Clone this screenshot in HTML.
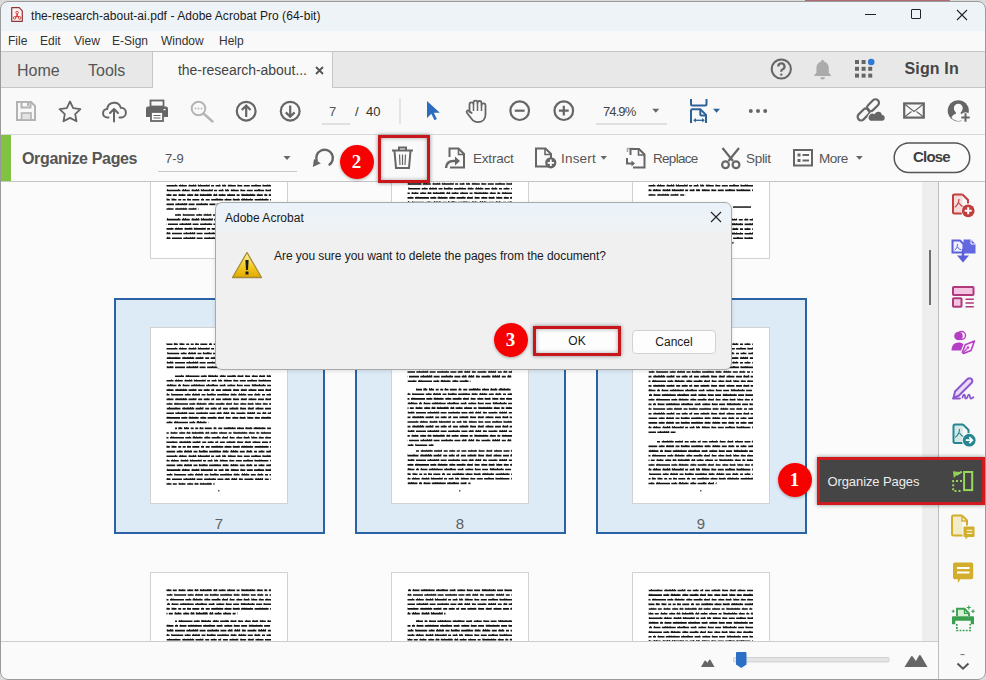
<!DOCTYPE html>
<html><head><meta charset="utf-8">
<style>
*{margin:0;padding:0;box-sizing:border-box}
html,body{width:986px;height:680px;overflow:hidden;background:#d9d9d9;font-family:"Liberation Sans",sans-serif}
.abs{position:absolute}
#win{position:absolute;left:0;top:0;width:986px;height:680px;overflow:hidden}
#frame{position:absolute;left:0;top:1px;width:986px;height:679px;border:1px solid #9a9a9a;border-radius:8px;box-shadow:0 0 0 6px #dadada;pointer-events:none}
#title{position:absolute;left:0;top:0;width:100%;height:31px;background:#eef3f8}
#menu{position:absolute;left:0;top:31px;width:100%;height:21px;background:#f9f9f9;border-bottom:1px solid #c6c6c6}
#tabs{position:absolute;left:0;top:52px;width:100%;height:36px;background:#e8e8e8;border-bottom:1px solid #c6c6c6}
#tool{position:absolute;left:0;top:88px;width:100%;height:47px;background:#f9f9f9;border-bottom:1px solid #d9d9d9}
#org{position:absolute;left:0;top:135px;width:100%;height:47px;background:#fafafa;border-bottom:1px solid #c4c4c4}
#content{position:absolute;left:0;top:182px;width:922px;height:459px;background:#fbfbfb;overflow:hidden}
#scroll{position:absolute;left:922px;top:182px;width:16px;height:459px;background:#eeeeee}
#rpanel{position:absolute;left:938px;top:182px;width:48px;height:498px;background:#f9f9f9;border-left:1px solid #bdbdbd}
#bottom{position:absolute;left:0;top:641px;width:938px;height:39px;background:#fafafa;border-top:1px solid #cdcdcd}
.t{position:absolute;white-space:nowrap;line-height:1}
.ic{position:absolute}
.circ{position:absolute;width:34px;height:34px;border-radius:50%;background:radial-gradient(circle at 50% 45%,#f70000 70%,#d80000 100%);box-shadow:0 1px 3px rgba(0,0,0,.3);color:#fff;font-family:"Liberation Serif",serif;font-weight:bold;font-size:19px;line-height:34px;text-align:center;text-indent:-1px}
</style></head><body>
<div id="win">
 <div id="title">
  <svg class="ic" style="left:11px;top:7px" width="12" height="15" viewBox="0 0 12 15"><path d="M.7 .7H8.2L11.3 3.8V14.3H.7z" fill="#fdf1f1" stroke="#8e3636" stroke-width="1.2" stroke-linejoin="round"/><path d="M6.1 6v2.8L3.9 10.6M6.1 8.8l2.4 1.8" fill="none" stroke="#d23c3c" stroke-width="1.4"/><circle cx="6.1" cy="5.6" r="1.25" fill="#fff" stroke="#d23c3c" stroke-width="1"/><circle cx="3.6" cy="10.9" r="1.25" fill="#fff" stroke="#d23c3c" stroke-width="1"/><circle cx="8.7" cy="10.9" r="1.25" fill="#fff" stroke="#d23c3c" stroke-width="1"/></svg>
  <div class="t" style="left:31px;top:10px;font-size:12px;color:#1a1a1a;letter-spacing:0.05px">the-research-about-ai.pdf - Adobe Acrobat Pro (64-bit)</div>
  <div class="abs" style="left:865px;top:14px;width:11px;height:1px;background:#222"></div>
  <div class="abs" style="left:911px;top:9px;width:10px;height:10px;border:1px solid #222;border-radius:1px"></div>
  <svg class="ic" style="left:956px;top:9px" width="12" height="12" viewBox="0 0 12 12"><path d="M1 1L11 11M11 1L1 11" stroke="#222" stroke-width="1.1"/></svg>
 </div>
 <div id="menu">
  <div class="t" style="left:8px;top:4px;font-size:12px;color:#333">File</div>
  <div class="t" style="left:40px;top:4px;font-size:12px;color:#333">Edit</div>
  <div class="t" style="left:74px;top:4px;font-size:12px;color:#333">View</div>
  <div class="t" style="left:112px;top:4px;font-size:12px;color:#333">E-Sign</div>
  <div class="t" style="left:161px;top:4px;font-size:12px;color:#333">Window</div>
  <div class="t" style="left:219px;top:4px;font-size:12px;color:#333">Help</div>
 </div>
 <div id="tabs">
  <div class="t" style="left:17px;top:11px;font-size:16px;color:#555">Home</div>
  <div class="t" style="left:88px;top:11px;font-size:16px;color:#555">Tools</div>
  <div class="abs" style="left:152px;top:0;width:181px;height:37px;background:#f9f9f9;border-left:1px solid #c6c6c6;border-right:1px solid #c6c6c6"></div>
  <div class="t" style="left:178px;top:11px;font-size:14px;color:#444;letter-spacing:-0.05px">the-research-about...</div>
  <svg class="ic" style="left:315px;top:13.5px" width="9" height="9" viewBox="0 0 9 9"><path d="M1 1L8 8M8 1L1 8" stroke="#555" stroke-width="1.8"/></svg>
  <svg class="ic" style="left:0;top:0" width="986" height="36" viewBox="0 52 986 36">
   <circle cx="781.3" cy="69" r="9.6" fill="none" stroke="#666" stroke-width="2"/>
   <path d="M778.3 66.5a3.1 3.1 0 1 1 4.3 2.8c-.9.4-1.3 1-1.3 1.9v.6" fill="none" stroke="#666" stroke-width="2.3"/>
   <circle cx="781.3" cy="74.6" r="1.2" fill="#666"/>
   <path d="M822.6 60a1.5 1.5 0 0 1 1.5 1.4c3 .8 4.7 3.4 4.7 6.6v4.7l2.2 2.6v.8h-16.8v-.8l2.2-2.6V68c0-3.2 1.7-5.8 4.7-6.6a1.5 1.5 0 0 1 1.5-1.4z" fill="#ababab"/>
   <path d="M820.2 77.2h4.8a2.4 2.4 0 0 1-4.8 0z" fill="#ababab"/>
   <g fill="#666">
    <rect x="855" y="60" width="4" height="4"/><rect x="861.6" y="60" width="4" height="4"/>
    <rect x="855" y="66.8" width="4" height="4"/><rect x="861.6" y="66.8" width="4" height="4"/><rect x="868.2" y="66.8" width="4" height="4"/>
    <rect x="855" y="73.6" width="4" height="4"/><rect x="861.6" y="73.6" width="4" height="4"/><rect x="868.2" y="73.6" width="4" height="4"/>
   </g>
   <circle cx="871.2" cy="62" r="3.3" fill="#2f7ad8"/>
  </svg>
  <div class="t" style="left:904.5px;top:9.4px;font-size:16px;font-weight:bold;color:#454545;letter-spacing:0.15px">Sign In</div>
 </div>
 <div id="tool">
  <svg class="ic" style="left:0;top:0" width="986" height="47" viewBox="0 88 986 47">
   <!-- save -->
   <g fill="none" stroke="#b3b3b3" stroke-width="2">
    <path d="M17 102h14l4 4v14H17z"/>
    <path d="M21.5 102v5.5h9V102"/>
   </g>
   <rect x="27" y="103" width="2" height="3" fill="#b3b3b3"/>
   <rect x="21.5" y="113" width="9.5" height="7" fill="#e3e3e3" stroke="#b3b3b3" stroke-width="1.6"/>
   <!-- star -->
   <path d="M70 101.5l3.2 6.6 7.2 1-5.2 5 1.3 7.2L70 117.9l-6.5 3.4 1.3-7.2-5.2-5 7.2-1z" fill="none" stroke="#666" stroke-width="1.8" stroke-linejoin="round"/>
   <!-- upload cloud -->
   <path d="M108.5 117.5h-1a4.3 4.3 0 0 1-.3-8.6 7 7 0 0 1 13.6-1.2 4.6 4.6 0 0 1 .4 9.8h-1.7" fill="none" stroke="#666" stroke-width="2" stroke-linecap="round"/>
   <path d="M114 121.5v-12M110 113l4-4 4 4" fill="none" stroke="#666" stroke-width="2" stroke-linecap="round" stroke-linejoin="round"/>
   <!-- print -->
   <rect x="150.5" y="100.5" width="13" height="6" fill="none" stroke="#666" stroke-width="1.8"/>
   <path d="M146 108.5a2 2 0 0 1 2-2h18a2 2 0 0 1 2 2v8.5h-22z" fill="#666"/>
   <rect x="151" y="112" width="12" height="9" fill="#fff" stroke="#666" stroke-width="1.8"/>
   <path d="M153.5 115.5h7M153.5 118h7" stroke="#666" stroke-width="1"/>
   <rect x="163.5" y="109" width="2" height="1.2" fill="#fff"/>
   <!-- search disabled -->
   <circle cx="198.5" cy="108.5" r="6.8" fill="none" stroke="#b5b5b5" stroke-width="2"/>
   <path d="M203.5 113.5l9 8" stroke="#b5b5b5" stroke-width="2.4" stroke-linecap="round"/>
   <circle cx="195.5" cy="108.5" r=".9" fill="#b5b5b5"/><circle cx="198.5" cy="108.5" r=".9" fill="#b5b5b5"/><circle cx="201.5" cy="108.5" r=".9" fill="#b5b5b5"/>
   <!-- up / down -->
   <circle cx="246.2" cy="111.2" r="9.4" fill="none" stroke="#666" stroke-width="2.2"/>
   <path d="M246.2 117v-11M241.8 110l4.4-4.4 4.4 4.4" fill="none" stroke="#666" stroke-width="2.2"/>
   <circle cx="290.2" cy="111.2" r="9.4" fill="none" stroke="#666" stroke-width="2.2"/>
   <path d="M290.2 105.4v11M285.8 112.4l4.4 4.4 4.4-4.4" fill="none" stroke="#666" stroke-width="2.2"/>
   <!-- page input -->
   <rect x="322" y="123.5" width="28" height="1" fill="#c8c8c8"/>
   <rect x="399.5" y="98" width="1" height="26" fill="#d0d0d0"/>
   <!-- cursor -->
   <path d="M427 101v17l4.3-4.2 3.2 6.4 2.4-1.2-3.1-6.2h6z" fill="#2b6cbf"/>
   <!-- hand -->
   <path d="M469.5 112V104.3a2 2 0 0 1 4 0V102.6a2 2 0 0 1 4 0V103a2 2 0 0 1 4 0V105.4a2 2 0 0 1 4 0V114.5c0 4.6-3.2 7.6-7.6 7.6-3 0-5-1.4-6.6-3.6l-4.4-5.8c-.9-1.2.6-2.8 1.9-1.9l2.9 2.2z" fill="none" stroke="#666" stroke-width="1.8" stroke-linejoin="round"/>
   <path d="M473.5 104.5V111M477.5 103V111M481.5 105.5V111" stroke="#666" stroke-width="1.5"/>
   <!-- zoom out / in -->
   <circle cx="519.7" cy="110.7" r="9.3" fill="none" stroke="#666" stroke-width="2.2"/>
   <path d="M514.8 110.7h9.8" stroke="#666" stroke-width="2.2"/>
   <circle cx="563.8" cy="110.7" r="9.3" fill="none" stroke="#666" stroke-width="2.2"/>
   <path d="M558.9 110.7h9.8M563.8 105.8v9.8" stroke="#666" stroke-width="2.2"/>
   <!-- zoom input -->
   <rect x="596" y="123.5" width="71" height="1" fill="#c8c8c8"/>
   <path d="M652.3 108.8h7l-3.5 4z" fill="#666"/>
   <!-- fit page icon -->
   <g fill="none" stroke="#2d6199" stroke-width="2">
    <path d="M691 99v5q0 1.5 1.5 1.5h12.5q1.5 0 1.5-1.5v-5"/>
    <path d="M691 123v-12.3q0-1.5 1.5-1.5h7.8l5.7 5.7V123"/>
    <path d="M700.3 109.5v5q0 .9.9.9h4.9"/>
   </g>
   <path d="M694.5 120.3h9" fill="none" stroke="#2d6199" stroke-width="1.3"/>
   <path d="M693.2 120.3l2.6-2.3v4.6zM704.8 120.3l-2.6-2.3v4.6z" fill="#2d6199"/>
   <path d="M713 108.8h7l-3.5 4z" fill="#2d6199"/>
   <!-- dots -->
   <circle cx="750.8" cy="111" r="2" fill="#666"/><circle cx="758" cy="111" r="2" fill="#666"/><circle cx="765.2" cy="111" r="2" fill="#666"/>
   <!-- link cloud -->
   <g fill="none" stroke="#666" stroke-width="2.2">
    <rect x="-3.5" y="-7" width="7" height="14" rx="3.5" transform="translate(873 105.2) rotate(45)"/>
    <rect x="-3.5" y="-7" width="7" height="14" rx="3.5" transform="translate(863.6 114.4) rotate(45)"/>
   </g>
   <path d="M870.5 120.7h11.3a2.8 2.8 0 0 0 .2-5.6 3.9 3.9 0 0 0-7.5-.9 2.9 2.9 0 0 0-4 6.5z" fill="#666" stroke="#f9f9f9" stroke-width="2.2" paint-order="stroke"/>
   <!-- mail -->
   <rect x="904.2" y="103.4" width="19.6" height="14.2" fill="none" stroke="#666" stroke-width="2.2"/>
   <path d="M904.5 104l9.5 7.5 9.5-7.5M904.5 117l7-5.5M923.5 117l-7-5.5" fill="none" stroke="#666" stroke-width="1.1"/>
   <!-- user -->
   <circle cx="958.3" cy="110.8" r="10.6" fill="#666"/>
   <path d="M951.5 117.5c1-2.6 3-3.3 4.4-3.8v-1.3c-1.3-.9-2-2.6-2-4.3 0-2.8 1.9-4.4 4.4-4.4s4.4 1.6 4.4 4.4c0 1.7-.7 3.4-2 4.3v1.3c1.4.5 3.4 1.2 4.4 3.8a8.5 8.5 0 0 1-13.6 0z" fill="#fafafa"/>
   <circle cx="965.5" cy="117.5" r="5.2" fill="#f9f9f9"/>
   <path d="M965.5 113.3v8.4M961.3 117.5h8.4" stroke="#666" stroke-width="2"/>
  </svg>
  <div class="t" style="left:329px;top:17px;font-size:13px;color:#555">7</div>
  <div class="t" style="left:355px;top:17px;font-size:13px;color:#333">/</div>
  <div class="t" style="left:366px;top:17px;font-size:13px;color:#333">40</div>
  <div class="t" style="left:603px;top:17px;font-size:13px;color:#444;letter-spacing:-0.9px">74.9%</div>
 </div>
 <div id="org">
  <div class="abs" style="left:0;top:0;width:11px;height:46px;background:#80c342"></div>
  <div class="t" style="left:22px;top:16px;font-size:16px;font-weight:bold;color:#555;letter-spacing:-0.35px">Organize Pages</div>
  <div class="t" style="left:165px;top:17px;font-size:13px;color:#555">7-9</div>
  <div class="abs" style="left:158px;top:36px;width:139px;height:1px;background:#c8c8c8"></div>
  <svg class="ic" style="left:0;top:0" width="986" height="47" viewBox="0 135 986 47">
   <path d="M283.5 156h7l-3.5 4z" fill="#666"/>
   <!-- rotate -->
   <path d="M316.9 161.2A8.3 8.3 0 1 1 328.7 165.2" fill="none" stroke="#666" stroke-width="2.4"/>
   <path d="M312.8 167L314 159l6.8 4.3z" fill="#666"/>
   <!-- trash -->
   <path d="M392 150.5h21M399 150v-2.6h7v2.6" fill="none" stroke="#666" stroke-width="2"/>
   <path d="M394.5 151l1.5 17h13l1.5-17" fill="none" stroke="#666" stroke-width="2"/>
   <path d="M399.5 154.5l.5 10.5M402.5 154.5v10.5M405.5 154.5l-.5 10.5" stroke="#666" stroke-width="1.2"/>
   <!-- extract -->
   <path d="M449.5 157v-8.5h9l5.5 5.5v13.5h-14" fill="none" stroke="#666" stroke-width="2"/>
   <path d="M458.5 148.5v6h6" fill="none" stroke="#666" stroke-width="1.6"/>
   <path d="M446 168c.3-4.5 3-7 7.5-7h2" fill="none" stroke="#666" stroke-width="2.4"/>
   <path d="M455 156.5l5 4.5-5 4.5z" fill="#666"/>
   <!-- insert -->
   <path d="M548 166.5h-12v-18h9.5l5.5 5.5v5" fill="none" stroke="#666" stroke-width="2"/>
   <path d="M545 148.5v6h6" fill="none" stroke="#666" stroke-width="1.6"/>
   <circle cx="550.8" cy="162.8" r="5.6" fill="#666"/>
   <path d="M550.8 159.6v6.4M547.6 162.8h6.4" stroke="#fff" stroke-width="1.8"/>
   <path d="M600.5 156h6.5l-3.25 3.8z" fill="#666"/>
   <!-- replace -->
   <path d="M627.5 152v-3.5h6M636 145.5" fill="none" stroke="#aaa" stroke-width="1.6"/>
   <path d="M630.5 155v-6h8.5l5.5 5.5V167.5h-11.5" fill="none" stroke="#666" stroke-width="2"/>
   <path d="M638.5 149v6h6" fill="none" stroke="#666" stroke-width="1.6"/>
   <path d="M627 158v5.5h5" fill="none" stroke="#666" stroke-width="2"/>
   <path d="M631.5 160.5l3.5 3-3.5 3z" fill="#666"/>
   <!-- split -->
   <g fill="none" stroke="#666" stroke-width="2.2">
    <path d="M722.5 148l10.5 13M739 148l-10.5 13"/>
    <circle cx="725.5" cy="164.8" r="3.4"/><circle cx="736" cy="164.8" r="3.4"/>
   </g>
   <!-- more -->
   <rect x="794" y="150" width="18" height="15.5" fill="none" stroke="#666" stroke-width="2"/>
   <rect x="797.5" y="153.5" width="3" height="3" fill="#666"/><rect x="797.5" y="159" width="3" height="3" fill="#666"/><path d="M802.5 155h6.5M802.5 160.5h6.5" stroke="#666" stroke-width="1.8"/>
   <path d="M856 156h6.8l-3.4 3.8z" fill="#666"/>
   <!-- close btn -->
   <rect x="894.2" y="143" width="75.5" height="29.5" rx="14.75" fill="#fbfbfb" stroke="#555" stroke-width="1.5"/>
  </svg>
  <div class="t" style="left:473px;top:17px;font-size:13.5px;color:#555;letter-spacing:-0.2px">Extract</div>
  <div class="t" style="left:561px;top:17px;font-size:13.5px;color:#555;letter-spacing:0.2px">Insert</div>
  <div class="t" style="left:653px;top:17px;font-size:13.5px;color:#555;letter-spacing:-0.7px">Replace</div>
  <div class="t" style="left:746px;top:17px;font-size:13.5px;color:#555;letter-spacing:-0.3px">Split</div>
  <div class="t" style="left:819px;top:17px;font-size:13.5px;color:#555;letter-spacing:-0.5px">More</div>
  <div class="t" style="left:913px;top:14px;font-size:15px;font-weight:bold;color:#404040;letter-spacing:-0.8px">Close</div>
 </div>
 <div id="content">
  <svg width="922" height="459" viewBox="0 182 922 459" style="position:absolute;left:0;top:0">
  <defs><path id="l0" d="M0.0 .8h9.0v1.6h-9.0zM6.0 .1h.8v.9h-.8zM10.5 .8h14.0v1.6h-14.0zM11.4 .1h.8v.9h-.8zM13.2 .1h.8v.9h-.8zM25.8 .8h6.0v1.6h-6.0zM29.4 .1h.8v.9h-.8zM33.1 .8h10.0v1.6h-10.0zM33.5 .1h.8v.9h-.8zM34.7 .1h.8v.9h-.8zM36.8 .1h.8v.9h-.8zM40.1 .1h.8v.9h-.8zM44.8 .8h6.0v1.6h-6.0zM46.2 .1h.8v.9h-.8zM47.8 .1h.8v.9h-.8zM52.1 .8h9.0v1.6h-9.0zM57.6 .1h.8v.9h-.8zM58.8 .1h.8v.9h-.8zM62.4 .8h6.0v1.6h-6.0zM63.5 .1h.8v.9h-.8zM67.5 .1h.8v.9h-.8zM70.1 .8h5.0v1.6h-5.0zM70.7 .1h.8v.9h-.8zM76.8 .8h6.0v1.6h-6.0zM78.3 .1h.8v.9h-.8zM84.1 .8h6.0v1.6h-6.0zM84.8 .1h.8v.9h-.8zM88.6 .1h.8v.9h-.8zM91.8 .8h6.0v1.6h-6.0zM91.8 .1h.8v.9h-.8zM93.9 .1h.8v.9h-.8zM99.3 .8h5.0v1.6h-5.0zM100.2 .1h.8v.9h-.8zM105.6 .8h14.0v1.6h-14.0zM107.0 .1h.8v.9h-.8zM111.6 .1h.8v.9h-.8zM112.9 .1h.8v.9h-.8zM115.5 .1h.8v.9h-.8zM117.7 .1h.8v.9h-.8z"/><path id="l1" d="M0.0 .8h9.0v1.6h-9.0zM0.4 .1h.8v.9h-.8zM2.6 .1h.8v.9h-.8zM10.3 .8h4.0v1.6h-4.0zM10.7 .1h.8v.9h-.8zM12.0 .1h.8v.9h-.8zM16.0 .8h5.0v1.6h-5.0zM16.1 .1h.8v.9h-.8zM18.0 .1h.8v.9h-.8zM22.7 .8h3.0v1.6h-3.0zM27.2 .8h3.0v1.6h-3.0zM31.5 .8h4.0v1.6h-4.0zM32.2 .1h.8v.9h-.8zM36.8 .8h7.0v1.6h-7.0zM45.5 .8h3.0v1.6h-3.0zM46.4 .1h.8v.9h-.8zM50.2 .8h4.0v1.6h-4.0zM55.7 .8h12.0v1.6h-12.0zM60.3 .1h.8v.9h-.8zM61.6 .1h.8v.9h-.8zM64.1 .1h.8v.9h-.8zM69.0 .8h7.0v1.6h-7.0zM70.9 .1h.8v.9h-.8zM77.3 .8h7.0v1.6h-7.0zM77.9 .1h.8v.9h-.8zM82.3 .1h.8v.9h-.8zM85.6 .8h12.0v1.6h-12.0zM87.0 .1h.8v.9h-.8zM88.4 .1h.8v.9h-.8zM90.8 .1h.8v.9h-.8zM94.5 .1h.8v.9h-.8zM99.1 .8h14.0v1.6h-14.0zM104.2 .1h.8v.9h-.8zM106.5 .1h.8v.9h-.8zM110.2 .1h.8v.9h-.8zM114.6 .8h5.4v1.6h-5.4z"/><path id="l2" d="M0.0 .8h14.0v1.6h-14.0zM2.5 .1h.8v.9h-.8zM9.1 .1h.8v.9h-.8zM15.7 .8h12.0v1.6h-12.0zM17.2 .1h.8v.9h-.8zM21.1 .1h.8v.9h-.8zM23.5 .1h.8v.9h-.8zM25.4 .1h.8v.9h-.8zM29.0 .8h8.0v1.6h-8.0zM33.4 .1h.8v.9h-.8zM36.0 .1h.8v.9h-.8zM38.7 .8h4.0v1.6h-4.0zM44.2 .8h6.0v1.6h-6.0zM47.3 .1h.8v.9h-.8zM51.7 .8h3.0v1.6h-3.0zM53.8 .1h.8v.9h-.8zM56.4 .8h5.0v1.6h-5.0zM62.9 .8h9.0v1.6h-9.0zM66.0 .1h.8v.9h-.8zM70.0 .1h.8v.9h-.8zM73.6 .8h6.0v1.6h-6.0zM74.1 .1h.8v.9h-.8zM81.3 .8h6.0v1.6h-6.0zM82.2 .1h.8v.9h-.8zM86.2 .1h.8v.9h-.8zM89.0 .8h8.0v1.6h-8.0zM91.2 .1h.8v.9h-.8zM98.5 .8h6.0v1.6h-6.0zM105.8 .8h6.0v1.6h-6.0zM106.4 .1h.8v.9h-.8zM110.6 .1h.8v.9h-.8zM113.1 .8h6.9v1.6h-6.9z"/><path id="l3" d="M0.0 .8h6.0v1.6h-6.0zM3.5 .1h.8v.9h-.8zM7.7 .8h12.0v1.6h-12.0zM7.9 .1h.8v.9h-.8zM21.2 .8h6.0v1.6h-6.0zM24.0 .1h.8v.9h-.8zM28.5 .8h8.0v1.6h-8.0zM29.7 .1h.8v.9h-.8zM32.1 .1h.8v.9h-.8zM35.0 .1h.8v.9h-.8zM38.0 .8h4.0v1.6h-4.0zM43.3 .8h9.0v1.6h-9.0zM43.5 .1h.8v.9h-.8zM47.4 .1h.8v.9h-.8zM48.9 .1h.8v.9h-.8zM53.6 .8h12.0v1.6h-12.0zM59.1 .1h.8v.9h-.8zM61.2 .1h.8v.9h-.8zM67.1 .8h6.0v1.6h-6.0zM68.0 .1h.8v.9h-.8zM70.3 .1h.8v.9h-.8zM74.8 .8h8.0v1.6h-8.0zM75.7 .1h.8v.9h-.8zM77.7 .1h.8v.9h-.8zM79.9 .1h.8v.9h-.8zM84.3 .8h5.0v1.6h-5.0zM90.8 .8h6.0v1.6h-6.0zM91.9 .1h.8v.9h-.8zM94.8 .1h.8v.9h-.8zM98.5 .8h3.0v1.6h-3.0zM103.0 .8h6.0v1.6h-6.0zM105.9 .1h.8v.9h-.8zM110.7 .8h6.0v1.6h-6.0zM114.3 .1h.8v.9h-.8zM118.4 .8h1.6v1.6h-1.6zM118.8 .1h.8v.9h-.8z"/><path id="l4" d="M0.0 .8h14.0v1.6h-14.0zM0.6 .1h.8v.9h-.8zM11.6 .1h.8v.9h-.8zM15.3 .8h8.0v1.6h-8.0zM16.7 .1h.8v.9h-.8zM18.6 .1h.8v.9h-.8zM25.0 .8h8.0v1.6h-8.0zM25.9 .1h.8v.9h-.8zM29.5 .1h.8v.9h-.8zM31.7 .1h.8v.9h-.8zM34.3 .8h12.0v1.6h-12.0zM34.4 .1h.8v.9h-.8zM36.6 .1h.8v.9h-.8zM42.9 .1h.8v.9h-.8zM45.3 .1h.8v.9h-.8zM47.6 .8h3.0v1.6h-3.0zM52.1 .8h5.0v1.6h-5.0zM55.6 .1h.8v.9h-.8zM58.6 .8h4.0v1.6h-4.0zM58.9 .1h.8v.9h-.8zM60.8 .1h.8v.9h-.8zM64.3 .8h8.0v1.6h-8.0zM65.0 .1h.8v.9h-.8zM67.0 .1h.8v.9h-.8zM73.8 .8h5.0v1.6h-5.0zM74.2 .1h.8v.9h-.8zM80.3 .8h6.0v1.6h-6.0zM87.6 .8h10.0v1.6h-10.0zM91.5 .1h.8v.9h-.8zM92.8 .1h.8v.9h-.8zM98.9 .8h14.0v1.6h-14.0zM99.1 .1h.8v.9h-.8zM103.4 .1h.8v.9h-.8zM105.3 .1h.8v.9h-.8zM114.6 .8h5.4v1.6h-5.4zM115.2 .1h.8v.9h-.8zM118.6 .1h.8v.9h-.8z"/><path id="l5" d="M0.0 .8h8.0v1.6h-8.0zM2.8 .1h.8v.9h-.8zM4.8 .1h.8v.9h-.8zM9.3 .8h4.0v1.6h-4.0zM15.0 .8h7.0v1.6h-7.0zM15.4 .1h.8v.9h-.8zM18.8 .1h.8v.9h-.8zM23.7 .8h6.0v1.6h-6.0zM26.0 .1h.8v.9h-.8zM31.0 .8h4.0v1.6h-4.0zM31.5 .1h.8v.9h-.8zM33.3 .1h.8v.9h-.8zM36.3 .8h12.0v1.6h-12.0zM36.9 .1h.8v.9h-.8zM39.7 .1h.8v.9h-.8zM43.9 .1h.8v.9h-.8zM45.2 .1h.8v.9h-.8zM46.8 .1h.8v.9h-.8zM49.8 .8h4.0v1.6h-4.0zM50.7 .1h.8v.9h-.8zM52.6 .1h.8v.9h-.8zM55.1 .8h7.0v1.6h-7.0zM58.7 .1h.8v.9h-.8zM63.6 .8h8.0v1.6h-8.0zM65.8 .1h.8v.9h-.8zM73.1 .8h3.0v1.6h-3.0zM77.8 .8h14.0v1.6h-14.0zM77.8 .1h.8v.9h-.8zM79.1 .1h.8v.9h-.8zM83.1 .1h.8v.9h-.8zM86.8 .1h.8v.9h-.8zM88.8 .1h.8v.9h-.8zM93.3 .8h6.0v1.6h-6.0zM94.4 .1h.8v.9h-.8zM100.8 .8h3.0v1.6h-3.0zM101.3 .1h.8v.9h-.8zM105.3 .8h12.0v1.6h-12.0zM106.1 .1h.8v.9h-.8zM108.5 .1h.8v.9h-.8z"/><path id="l6" d="M0.0 .8h10.0v1.6h-10.0zM1.2 .1h.8v.9h-.8zM3.6 .1h.8v.9h-.8zM5.1 .1h.8v.9h-.8zM11.5 .8h3.0v1.6h-3.0zM12.5 .1h.8v.9h-.8zM16.0 .8h7.0v1.6h-7.0zM16.7 .1h.8v.9h-.8zM24.3 .8h14.0v1.6h-14.0zM27.3 .1h.8v.9h-.8zM29.3 .1h.8v.9h-.8zM32.2 .1h.8v.9h-.8zM39.6 .8h12.0v1.6h-12.0zM41.6 .1h.8v.9h-.8zM45.4 .1h.8v.9h-.8zM46.7 .1h.8v.9h-.8zM53.1 .8h6.0v1.6h-6.0zM57.6 .1h.8v.9h-.8zM60.8 .8h8.0v1.6h-8.0zM64.1 .1h.8v.9h-.8zM70.3 .8h6.0v1.6h-6.0zM70.7 .1h.8v.9h-.8zM77.6 .8h6.0v1.6h-6.0zM85.3 .8h14.0v1.6h-14.0zM85.4 .1h.8v.9h-.8zM87.2 .1h.8v.9h-.8zM88.8 .1h.8v.9h-.8zM92.5 .1h.8v.9h-.8zM96.7 .1h.8v.9h-.8zM100.6 .8h6.0v1.6h-6.0zM107.9 .8h12.1v1.6h-12.1zM108.2 .1h.8v.9h-.8z"/><path id="l7" d="M0.0 .8h7.0v1.6h-7.0zM0.3 .1h.8v.9h-.8zM3.6 .1h.8v.9h-.8zM5.2 .1h.8v.9h-.8zM8.5 .8h10.0v1.6h-10.0zM19.8 .8h12.0v1.6h-12.0zM22.7 .1h.8v.9h-.8zM26.4 .1h.8v.9h-.8zM28.9 .1h.8v.9h-.8zM30.8 .1h.8v.9h-.8zM33.1 .8h6.0v1.6h-6.0zM40.6 .8h12.0v1.6h-12.0zM45.4 .1h.8v.9h-.8zM49.3 .1h.8v.9h-.8zM53.9 .8h6.0v1.6h-6.0zM61.2 .8h5.0v1.6h-5.0zM62.9 .1h.8v.9h-.8zM64.9 .1h.8v.9h-.8zM67.7 .8h6.0v1.6h-6.0zM68.6 .1h.8v.9h-.8zM70.7 .1h.8v.9h-.8zM72.8 .1h.8v.9h-.8zM75.4 .8h4.0v1.6h-4.0zM76.1 .1h.8v.9h-.8zM80.9 .8h9.0v1.6h-9.0zM87.1 .1h.8v.9h-.8zM91.6 .8h8.0v1.6h-8.0zM92.2 .1h.8v.9h-.8zM94.7 .1h.8v.9h-.8zM96.8 .1h.8v.9h-.8zM98.5 .1h.8v.9h-.8zM101.3 .8h4.0v1.6h-4.0zM106.8 .8h4.0v1.6h-4.0zM107.6 .1h.8v.9h-.8zM109.2 .1h.8v.9h-.8zM112.1 .8h7.9v1.6h-7.9zM114.6 .1h.8v.9h-.8zM116.8 .1h.8v.9h-.8zM118.1 .1h.8v.9h-.8z"/></defs>
<rect x="115" y="299" width="209" height="234" fill="#ddebf7" stroke="#2a62a3" stroke-width="2"/>
<text x="219" y="528.5" font-size="15" fill="#606060" text-anchor="middle" font-family="Liberation Sans">7</text>
<rect x="356" y="299" width="209" height="234" fill="#ddebf7" stroke="#2a62a3" stroke-width="2"/>
<text x="460" y="528.5" font-size="15" fill="#606060" text-anchor="middle" font-family="Liberation Sans">8</text>
<rect x="597" y="299" width="209" height="234" fill="#ddebf7" stroke="#2a62a3" stroke-width="2"/>
<text x="701" y="528.5" font-size="15" fill="#606060" text-anchor="middle" font-family="Liberation Sans">9</text>
<rect x="150.5" y="82.5" width="137" height="176" fill="#fff" stroke="#d2d2d2" stroke-width="1"/>
<g fill="#151515"><svg x="166.5" y="179.6" width="104.5" height="3"><use href="#l7" x="-0"/></svg><svg x="166.5" y="184.2" width="104.5" height="3"><use href="#l4" x="-3"/></svg><svg x="166.5" y="188.9" width="104.5" height="3"><use href="#l4" x="-0"/></svg><svg x="166.5" y="193.5" width="104.5" height="3"><use href="#l5" x="-3"/></svg><svg x="166.5" y="198.1" width="104.5" height="3"><use href="#l1" x="-11"/></svg><svg x="166.5" y="202.8" width="104.5" height="3"><use href="#l7" x="-11"/></svg><svg x="166.5" y="207.4" width="32.0" height="3"><use href="#l2" x="-7"/></svg><svg x="175.0" y="213.4" width="96.0" height="3"><use href="#l3" x="-0"/></svg><svg x="166.5" y="218.0" width="104.5" height="3"><use href="#l4" x="-0"/></svg><svg x="166.5" y="222.7" width="104.5" height="3"><use href="#l7" x="-7"/></svg><svg x="166.5" y="227.3" width="104.5" height="3"><use href="#l4" x="-7"/></svg><svg x="166.5" y="231.9" width="104.5" height="3"><use href="#l7" x="-3"/></svg><svg x="166.5" y="236.6" width="81.0" height="3"><use href="#l7" x="-3"/></svg></g>
<rect x="218" y="245" width="1.5" height="1.5" fill="#555"/>
<rect x="391.5" y="82.5" width="137" height="176" fill="#fff" stroke="#d2d2d2" stroke-width="1"/>
<g fill="#151515"><svg x="407.5" y="182.4" width="104.5" height="3"><use href="#l4" x="-0"/></svg><svg x="407.5" y="187.1" width="104.5" height="3"><use href="#l3" x="-7"/></svg><svg x="407.5" y="191.7" width="104.5" height="3"><use href="#l5" x="-11"/></svg><svg x="407.5" y="196.3" width="104.5" height="3"><use href="#l0" x="-3"/></svg><svg x="407.5" y="201.0" width="104.5" height="3"><use href="#l3" x="-3"/></svg></g>
<rect x="459" y="245" width="1.5" height="1.5" fill="#555"/>
<rect x="632.5" y="82.5" width="137" height="176" fill="#fff" stroke="#d2d2d2" stroke-width="1"/>
<g fill="#151515"><svg x="648.5" y="179.5" width="104.5" height="3"><use href="#l0" x="-0"/></svg><svg x="648.5" y="184.1" width="104.5" height="3"><use href="#l4" x="-7"/></svg><svg x="648.5" y="188.8" width="104.5" height="3"><use href="#l4" x="-11"/></svg><svg x="648.5" y="193.4" width="37.0" height="3"><use href="#l2" x="-7"/></svg><svg x="648.5" y="218.2" width="104.5" height="3"><use href="#l7" x="-11"/></svg><svg x="648.5" y="222.8" width="104.5" height="3"><use href="#l1" x="-3"/></svg><svg x="648.5" y="227.5" width="104.5" height="3"><use href="#l3" x="-7"/></svg><svg x="648.5" y="232.1" width="104.5" height="3"><use href="#l1" x="-3"/></svg><svg x="648.5" y="236.7" width="104.5" height="3"><use href="#l4" x="-3"/></svg><svg x="648.5" y="241.3" width="85.0" height="3"><use href="#l3" x="-7"/></svg></g>
<rect x="700" y="245" width="1.5" height="1.5" fill="#555"/>
<rect x="150.5" y="327.5" width="137" height="176" fill="#fff" stroke="#d2d2d2" stroke-width="1"/>
<g fill="#151515"><svg x="166.5" y="342.6" width="104.5" height="3"><use href="#l1" x="-3"/></svg><svg x="166.5" y="347.2" width="104.5" height="3"><use href="#l4" x="-3"/></svg><svg x="166.5" y="351.9" width="104.5" height="3"><use href="#l3" x="-7"/></svg><svg x="166.5" y="356.5" width="104.5" height="3"><use href="#l2" x="-0"/></svg><svg x="166.5" y="361.1" width="104.5" height="3"><use href="#l7" x="-0"/></svg><svg x="166.5" y="365.8" width="75.0" height="3"><use href="#l7" x="-0"/></svg><svg x="175.0" y="374.6" width="96.0" height="3"><use href="#l0" x="-0"/></svg><svg x="166.5" y="379.2" width="104.5" height="3"><use href="#l4" x="-7"/></svg><svg x="166.5" y="383.9" width="104.5" height="3"><use href="#l6" x="-0"/></svg><svg x="166.5" y="388.5" width="104.5" height="3"><use href="#l2" x="-7"/></svg><svg x="166.5" y="393.1" width="104.5" height="3"><use href="#l3" x="-3"/></svg><svg x="166.5" y="397.8" width="104.5" height="3"><use href="#l2" x="-7"/></svg><svg x="166.5" y="402.4" width="104.5" height="3"><use href="#l0" x="-3"/></svg><svg x="166.5" y="407.0" width="104.5" height="3"><use href="#l2" x="-0"/></svg><svg x="166.5" y="411.6" width="104.5" height="3"><use href="#l7" x="-11"/></svg><svg x="166.5" y="416.3" width="104.5" height="3"><use href="#l0" x="-11"/></svg><svg x="166.5" y="420.9" width="42.0" height="3"><use href="#l0" x="-3"/></svg><svg x="175.0" y="426.8" width="96.0" height="3"><use href="#l1" x="-7"/></svg><svg x="166.5" y="431.4" width="104.5" height="3"><use href="#l5" x="-11"/></svg><svg x="166.5" y="436.1" width="104.5" height="3"><use href="#l0" x="-7"/></svg><svg x="166.5" y="440.7" width="104.5" height="3"><use href="#l2" x="-3"/></svg><svg x="166.5" y="445.3" width="104.5" height="3"><use href="#l1" x="-11"/></svg><svg x="166.5" y="450.0" width="104.5" height="3"><use href="#l3" x="-11"/></svg><svg x="166.5" y="454.6" width="104.5" height="3"><use href="#l4" x="-3"/></svg><svg x="166.5" y="459.2" width="104.5" height="3"><use href="#l4" x="-11"/></svg><svg x="166.5" y="463.8" width="104.5" height="3"><use href="#l3" x="-11"/></svg><svg x="166.5" y="468.5" width="104.5" height="3"><use href="#l4" x="-0"/></svg><svg x="166.5" y="473.1" width="104.5" height="3"><use href="#l3" x="-0"/></svg><svg x="166.5" y="477.7" width="104.5" height="3"><use href="#l7" x="-3"/></svg><svg x="166.5" y="482.4" width="48.0" height="3"><use href="#l5" x="-3"/></svg></g>
<rect x="218" y="490" width="1.5" height="1.5" fill="#555"/>
<rect x="391.5" y="327.5" width="137" height="176" fill="#fff" stroke="#d2d2d2" stroke-width="1"/>
<g fill="#151515"><svg x="407.5" y="370.4" width="104.5" height="3"><use href="#l7" x="-11"/></svg><svg x="407.5" y="375.0" width="104.5" height="3"><use href="#l7" x="-7"/></svg><svg x="407.5" y="379.6" width="63.0" height="3"><use href="#l0" x="-0"/></svg><svg x="416.0" y="388.0" width="96.0" height="3"><use href="#l1" x="-3"/></svg><svg x="407.5" y="392.6" width="104.5" height="3"><use href="#l3" x="-3"/></svg><svg x="407.5" y="397.3" width="104.5" height="3"><use href="#l0" x="-7"/></svg><svg x="407.5" y="401.9" width="104.5" height="3"><use href="#l6" x="-0"/></svg><svg x="407.5" y="406.5" width="104.5" height="3"><use href="#l5" x="-7"/></svg><svg x="407.5" y="411.2" width="104.5" height="3"><use href="#l7" x="-0"/></svg><svg x="407.5" y="415.8" width="104.5" height="3"><use href="#l2" x="-11"/></svg><svg x="407.5" y="420.4" width="104.5" height="3"><use href="#l4" x="-3"/></svg><svg x="407.5" y="425.0" width="104.5" height="3"><use href="#l2" x="-11"/></svg><svg x="407.5" y="429.7" width="104.5" height="3"><use href="#l7" x="-0"/></svg><svg x="407.5" y="434.3" width="104.5" height="3"><use href="#l5" x="-11"/></svg><svg x="407.5" y="438.9" width="104.5" height="3"><use href="#l7" x="-7"/></svg><svg x="407.5" y="443.6" width="26.0" height="3"><use href="#l3" x="-0"/></svg><svg x="416.0" y="449.4" width="96.0" height="3"><use href="#l2" x="-11"/></svg><svg x="407.5" y="454.0" width="104.5" height="3"><use href="#l2" x="-3"/></svg><svg x="407.5" y="458.7" width="104.5" height="3"><use href="#l7" x="-0"/></svg><svg x="407.5" y="463.3" width="104.5" height="3"><use href="#l0" x="-3"/></svg><svg x="407.5" y="467.9" width="104.5" height="3"><use href="#l6" x="-3"/></svg><svg x="407.5" y="472.6" width="104.5" height="3"><use href="#l1" x="-11"/></svg><svg x="407.5" y="477.2" width="104.5" height="3"><use href="#l4" x="-11"/></svg><svg x="407.5" y="481.8" width="63.0" height="3"><use href="#l6" x="-0"/></svg></g>
<rect x="459" y="490" width="1.5" height="1.5" fill="#555"/>
<rect x="632.5" y="327.5" width="137" height="176" fill="#fff" stroke="#d2d2d2" stroke-width="1"/>
<g fill="#151515"><svg x="648.5" y="342.6" width="104.5" height="3"><use href="#l3" x="-7"/></svg><svg x="648.5" y="347.2" width="104.5" height="3"><use href="#l4" x="-0"/></svg><svg x="648.5" y="351.9" width="104.5" height="3"><use href="#l3" x="-11"/></svg><svg x="648.5" y="356.5" width="104.5" height="3"><use href="#l7" x="-0"/></svg><svg x="648.5" y="361.1" width="104.5" height="3"><use href="#l3" x="-7"/></svg><svg x="648.5" y="365.8" width="104.5" height="3"><use href="#l4" x="-7"/></svg><svg x="648.5" y="370.4" width="104.5" height="3"><use href="#l3" x="-0"/></svg><svg x="648.5" y="375.0" width="104.5" height="3"><use href="#l2" x="-11"/></svg><svg x="648.5" y="379.6" width="104.5" height="3"><use href="#l0" x="-7"/></svg><svg x="648.5" y="384.3" width="104.5" height="3"><use href="#l2" x="-11"/></svg><svg x="648.5" y="388.9" width="104.5" height="3"><use href="#l6" x="-3"/></svg><svg x="648.5" y="393.5" width="104.5" height="3"><use href="#l6" x="-11"/></svg><svg x="648.5" y="398.2" width="104.5" height="3"><use href="#l0" x="-3"/></svg><svg x="648.5" y="402.8" width="104.5" height="3"><use href="#l6" x="-7"/></svg><svg x="648.5" y="407.4" width="104.5" height="3"><use href="#l3" x="-3"/></svg><svg x="648.5" y="412.1" width="104.5" height="3"><use href="#l2" x="-11"/></svg><svg x="648.5" y="416.7" width="104.5" height="3"><use href="#l3" x="-11"/></svg><svg x="648.5" y="421.3" width="104.5" height="3"><use href="#l3" x="-11"/></svg><svg x="648.5" y="425.9" width="104.5" height="3"><use href="#l4" x="-11"/></svg><svg x="648.5" y="430.6" width="27.0" height="3"><use href="#l7" x="-11"/></svg><svg x="657.0" y="440.2" width="96.0" height="3"><use href="#l2" x="-11"/></svg><svg x="648.5" y="444.8" width="104.5" height="3"><use href="#l3" x="-11"/></svg><svg x="648.5" y="449.5" width="104.5" height="3"><use href="#l6" x="-0"/></svg><svg x="648.5" y="454.1" width="104.5" height="3"><use href="#l0" x="-7"/></svg><svg x="648.5" y="458.7" width="104.5" height="3"><use href="#l5" x="-7"/></svg><svg x="648.5" y="463.4" width="104.5" height="3"><use href="#l0" x="-3"/></svg><svg x="648.5" y="468.0" width="104.5" height="3"><use href="#l4" x="-11"/></svg><svg x="648.5" y="472.6" width="104.5" height="3"><use href="#l3" x="-7"/></svg><svg x="648.5" y="477.2" width="104.5" height="3"><use href="#l1" x="-7"/></svg><svg x="648.5" y="481.9" width="68.0" height="3"><use href="#l0" x="-3"/></svg></g>
<rect x="700" y="490" width="1.5" height="1.5" fill="#555"/>
<rect x="150.5" y="572.5" width="137" height="176" fill="#fff" stroke="#d2d2d2" stroke-width="1"/>
<g fill="#151515"><svg x="166.5" y="588.8" width="104.5" height="3"><use href="#l5" x="-3"/></svg><svg x="166.5" y="593.4" width="104.5" height="3"><use href="#l3" x="-0"/></svg><svg x="166.5" y="598.1" width="104.5" height="3"><use href="#l0" x="-7"/></svg><svg x="166.5" y="602.7" width="104.5" height="3"><use href="#l6" x="-11"/></svg><svg x="166.5" y="607.3" width="104.5" height="3"><use href="#l1" x="-11"/></svg><svg x="166.5" y="612.0" width="71.0" height="3"><use href="#l5" x="-7"/></svg><svg x="175.0" y="619.7" width="96.0" height="3"><use href="#l0" x="-7"/></svg><svg x="166.5" y="624.3" width="104.5" height="3"><use href="#l6" x="-3"/></svg><svg x="166.5" y="629.0" width="104.5" height="3"><use href="#l7" x="-0"/></svg><svg x="166.5" y="633.6" width="104.5" height="3"><use href="#l3" x="-3"/></svg><svg x="166.5" y="638.2" width="104.5" height="3"><use href="#l2" x="-0"/></svg></g>
<rect x="218" y="735" width="1.5" height="1.5" fill="#555"/>
<rect x="391.5" y="572.5" width="137" height="176" fill="#fff" stroke="#d2d2d2" stroke-width="1"/>
<g fill="#151515"><svg x="407.5" y="588.8" width="104.5" height="3"><use href="#l6" x="-11"/></svg><svg x="407.5" y="593.4" width="104.5" height="3"><use href="#l7" x="-3"/></svg><svg x="407.5" y="598.1" width="104.5" height="3"><use href="#l4" x="-7"/></svg><svg x="407.5" y="602.7" width="104.5" height="3"><use href="#l7" x="-11"/></svg><svg x="407.5" y="607.3" width="104.5" height="3"><use href="#l2" x="-3"/></svg><svg x="407.5" y="612.0" width="38.0" height="3"><use href="#l4" x="-11"/></svg><svg x="416.0" y="619.7" width="96.0" height="3"><use href="#l6" x="-3"/></svg><svg x="407.5" y="624.3" width="104.5" height="3"><use href="#l6" x="-7"/></svg><svg x="407.5" y="629.0" width="104.5" height="3"><use href="#l3" x="-0"/></svg><svg x="407.5" y="633.6" width="104.5" height="3"><use href="#l4" x="-7"/></svg><svg x="407.5" y="638.2" width="104.5" height="3"><use href="#l5" x="-3"/></svg></g>
<rect x="459" y="735" width="1.5" height="1.5" fill="#555"/>
<rect x="632.5" y="572.5" width="137" height="176" fill="#fff" stroke="#d2d2d2" stroke-width="1"/>
<g fill="#151515"><svg x="648.5" y="588.9" width="104.5" height="3"><use href="#l2" x="-0"/></svg><svg x="648.5" y="593.5" width="104.5" height="3"><use href="#l0" x="-11"/></svg><svg x="648.5" y="598.2" width="104.5" height="3"><use href="#l0" x="-7"/></svg><svg x="648.5" y="602.8" width="104.5" height="3"><use href="#l1" x="-3"/></svg><svg x="648.5" y="607.4" width="104.5" height="3"><use href="#l5" x="-0"/></svg><svg x="648.5" y="612.1" width="104.5" height="3"><use href="#l5" x="-3"/></svg><svg x="648.5" y="616.7" width="104.5" height="3"><use href="#l4" x="-0"/></svg><svg x="648.5" y="621.3" width="104.5" height="3"><use href="#l6" x="-0"/></svg><svg x="648.5" y="625.9" width="104.5" height="3"><use href="#l6" x="-11"/></svg><svg x="648.5" y="630.6" width="104.5" height="3"><use href="#l0" x="-11"/></svg><svg x="648.5" y="635.2" width="104.5" height="3"><use href="#l6" x="-7"/></svg><svg x="648.5" y="639.8" width="104.5" height="3"><use href="#l4" x="-11"/></svg></g>
<rect x="700" y="735" width="1.5" height="1.5" fill="#555"/>
<g fill="#1a1a1a"><rect x="718" y="206.3" width="13" height="1.5"/><rect x="733" y="206.3" width="18" height="1.5"/></g>
  </svg>
 </div>
 <div id="scroll"><div class="abs" style="left:7px;top:68px;width:2px;height:55px;background:#707070"></div></div>
 <div id="rpanel">
  <svg class="ic" style="left:0;top:0" width="48" height="498" viewBox="938 182 48 498">
   <g transform="translate(-1 0)"><!-- 1 create pdf red -->
   <path d="M962.5 194.5h-8a1.5 1.5 0 0 0-1.5 1.5v16a1.5 1.5 0 0 0 1.5 1.5h7.5" fill="#f7dada" stroke="#c23d3d" stroke-width="2"/>
   <path d="M962.5 194.5l5.5 5.5v3.5" fill="none" stroke="#c23d3d" stroke-width="2"/>
   <path d="M959 199c0 3.2-1.6 6.3-4.3 8.4M959 203c1.2 2.2 3 3.6 5.2 4.2" fill="none" stroke="#c23d3d" stroke-width="1.1"/>
   <circle cx="968.2" cy="210.8" r="6.4" fill="#c23d3d" stroke="#f9f9f9" stroke-width="1.4" paint-order="stroke"/>
   <path d="M968.2 207.3v7M964.7 210.8h7" stroke="#fff" stroke-width="2"/>
   </g>
   <!-- 2 export blue -->
   <path d="M951.5 240.5h7.5l3.5 3.5v8.5h-11z" fill="#eef0ff" stroke="#5b60d8" stroke-width="2"/>
   <path d="M962.5 239.5h7.5l4.5 4.5v9.5h-12z" fill="#6468e0"/>
   <path d="M970 239.5v4.5h4.5" fill="none" stroke="#f9f9f9" stroke-width="1"/>
   <path d="M962 249v7" stroke="#5b60d8" stroke-width="2.4"/>
   <path d="M956 255.5h12l-6 7z" fill="#5b60d8"/>
   <path d="M956.5 244c0 2.6-1 4.8-3 6.4M956.5 247c.8 1.5 2 2.4 3.6 2.8" fill="none" stroke="#5b60d8" stroke-width="1"/>
   <!-- 3 edit pink -->
   <rect x="952" y="287" width="20.5" height="8" rx=".8" fill="#f4c4e2" stroke="#b0397c" stroke-width="2"/>
   <rect x="952" y="298.3" width="8.5" height="8.5" rx=".8" fill="#f4c4e2" stroke="#b0397c" stroke-width="2"/>
   <path d="M964.5 299.3h8.3M964.5 303h8.3M964.5 306.7h8.3" stroke="#b0397c" stroke-width="1.4"/>
   <!-- 4 request sign magenta -->
   <circle cx="960.5" cy="335.5" r="4" fill="none" stroke="#b43fc4" stroke-width="1.4"/>
   <circle cx="957.5" cy="336" r="4.3" fill="#b43fc4"/>
   <path d="M950.5 350.5c0-5.3 2.8-8 7-8 2.2 0 3.8.6 5 1.8l-2.5 6.2z" fill="#b43fc4"/>
   <path d="M973.5 341l-3.5 9.5-7.5 3-1.2-1.2 3-7.5z" fill="#fbeefd" stroke="#b43fc4" stroke-width="1.6" stroke-linejoin="round"/>
   <path d="M962.3 352.5l4-4" stroke="#b43fc4" stroke-width="1.1"/>
   <circle cx="967" cy="347.5" r="1.2" fill="#b43fc4"/>
   <!-- 5 fill sign purple -->
   <path d="M952.5 398l1.5-6.5 12.5-12.5a2.8 2.8 0 0 1 4 4L958 395.5z" fill="#ead8f8" stroke="#8d58cc" stroke-width="2" stroke-linejoin="round"/>
   <path d="M952 398.5h7M961.5 397.5c.8-3.5 2.5-3.5 2.5-1s1.8 2.8 2.6 0 2.2-2.2 2.4.4 1.8 2 3.3.3" fill="none" stroke="#8d58cc" stroke-width="1.8" stroke-linecap="round"/>
   <!-- 6 export teal -->
   <path d="M962 424.5h-8a1.5 1.5 0 0 0-1.5 1.5v15.5a1.5 1.5 0 0 0 1.5 1.5h7.5" fill="#d5e8e8" stroke="#26868f" stroke-width="2"/>
   <path d="M962 424.5l5.5 5.5v3.5" fill="none" stroke="#26868f" stroke-width="2"/>
   <path d="M958.5 429c0 3.2-1.6 6.3-4.3 8.4M958.5 433c1.2 2.2 3 3.6 5.2 4.2" fill="none" stroke="#26868f" stroke-width="1.1"/>
   <circle cx="968.2" cy="440.2" r="6.4" fill="#26868f" stroke="#f9f9f9" stroke-width="1.4" paint-order="stroke"/>
   <path d="M964.8 440.2h6M968.3 437.2l3 3-3 3" fill="none" stroke="#fff" stroke-width="1.8"/>
   <!-- 8 doc yellow -->
   <path d="M961 515.5h-8.5a1.5 1.5 0 0 0-1.5 1.5v17a1.5 1.5 0 0 0 1.5 1.5h9" fill="#f3ecc8" stroke="#d2ae2c" stroke-width="2"/>
   <path d="M961 515.5l5 5v5" fill="none" stroke="#d2ae2c" stroke-width="2"/>
   <path d="M961 516v5h5" fill="none" stroke="#d2ae2c" stroke-width="1.4"/>
   <path d="M963.5 526.5h9a1 1 0 0 1 1 1v8.5a1 1 0 0 1-1 1h-5.5l-2.5 2.5v-2.5h-1a1 1 0 0 1-1-1v-8.5a1 1 0 0 1 1-1z" fill="#d2ae2c" stroke="#f9f9f9" stroke-width="1" paint-order="stroke"/>
   <path d="M965.8 530.3h5.5M965.8 533.3h5.5" stroke="#fff" stroke-width="1.1"/>
   <!-- 9 comment yellow -->
   <path d="M953.8 562.5h16.6a1.8 1.8 0 0 1 1.8 1.8v13.2a1.8 1.8 0 0 1-1.8 1.8h-11l-2.5 3.8v-3.8h-3.1a1.8 1.8 0 0 1-1.8-1.8V564.3a1.8 1.8 0 0 1 1.8-1.8z" fill="#d2ae2c"/>
   <path d="M956 568h12.5M956 572.5h12.5" stroke="#fff" stroke-width="1.8"/>
   <!-- 10 print green -->
   <path d="M956 616v-7.2h7.5l4.5 4.5V616" fill="#d3efd6" stroke="#3b9f50" stroke-width="1.9"/>
   <path d="M963.5 609v4.3h4.3" fill="none" stroke="#3b9f50" stroke-width="1.3"/>
   <path d="M952 616.3h20a1 1 0 0 1 1 1v7h-3.3v-3.6h-15.4v3.6H951v-7a1 1 0 0 1 1-1z" fill="#3b9f50"/>
   <path d="M955.8 624v6.5h13.4V624" fill="none" stroke="#3b9f50" stroke-width="1.7" stroke-dasharray="1.8 1.3"/>
   <path d="M967.8 605.5v4M965.8 607.5h4M972 609.5v3.5M970.3 611.2h3.5M952.2 609.8v3M950.7 611.3h3" stroke="#3b9f50" stroke-width="1.1"/>
   <!-- chevron -->
   <rect x="959.5" y="654" width="4" height="1.1" fill="#777"/>
   <path d="M956.5 663.5l5.5 5.2 5.5-5.2" fill="none" stroke="#555" stroke-width="2"/>
  </svg>
 </div>
 <div id="bottom">
  <svg class="ic" style="left:0;top:0" width="938" height="39" viewBox="0 641 938 39">
   <path d="M701 666l3.3-5.8q.9-1.3 1.8 0l1.2 1.6 1.6-2.6q.9-1.3 1.8 0l3.8 6.8z" fill="#666"/>
   <rect x="733.5" y="656.5" width="155.5" height="4.5" rx="1" fill="#e4e4e4" stroke="#d2d2d2" stroke-width="1"/>
   <path d="M736 652a1 1 0 0 1 1-1h8.5a1 1 0 0 1 1 1v11.5l-5.25 3.5-5.25-3.5z" fill="#2b70c4"/>
   <path d="M904.5 666l6.4-10.2q1-1.4 2 0l3 4.2 3-5.3q1-1.4 2 0l6.6 11.3z" fill="#666"/>
  </svg>
 </div>
<div id="dlg" style="position:absolute;left:215px;top:202px;width:517px;height:168px;border:1px solid #a9a9a9;border-radius:7px;background:linear-gradient(#eaf2f9 0px,#eef3f7 20px,#f0f0f0 34px,#f0f0f0 100%);box-shadow:0 1px 4px rgba(0,0,0,.12);overflow:hidden">
  <div class="t" style="left:9px;top:9px;font-size:12px;color:#1a1a1a">Adobe Acrobat</div>
  <svg class="ic" style="left:494px;top:8px" width="12" height="12" viewBox="0 0 12 12"><path d="M1 1L11 11M11 1L1 11" stroke="#222" stroke-width="1.1"/></svg>
  <svg class="ic" style="left:15px;top:48px" width="32" height="28" viewBox="0 0 32 28">
   <defs><linearGradient id="wg" x1="0" y1="0" x2="0" y2="1"><stop offset="0" stop-color="#fff3a8"/><stop offset=".6" stop-color="#f2c81c"/><stop offset="1" stop-color="#e0a800"/></linearGradient></defs>
   <path d="M16 1.5L30.5 26.5H1.5z" fill="url(#wg)" stroke="#a58a3a" stroke-width="1.3" stroke-linejoin="round"/>
   <path d="M14.4 9h3.2l-.6 10h-2z" fill="#1a1a1a"/>
   <rect x="14.5" y="20.5" width="3" height="3" fill="#1a1a1a"/>
  </svg>
  <div class="t" style="left:58px;top:47px;font-size:12px;color:#1a1a1a;letter-spacing:-0.05px">Are you sure you want to delete the pages from the document?</div>
  <div class="abs" style="left:416px;top:127px;width:84px;height:24px;background:#fdfdfd;border:1px solid #d2d2d2;border-radius:4px"></div>
  <div class="t" style="left:416px;top:133px;width:84px;text-align:center;font-size:12px;color:#1a1a1a">Cancel</div>
  <div class="abs" style="left:320px;top:125px;width:84px;height:27px;background:#fdfdfd;border-radius:3px"></div>
  <div class="t" style="left:319px;top:132px;width:84px;text-align:center;font-size:12px;color:#1a1a1a">OK</div>
 </div>
 <div class="abs" style="left:533px;top:326px;width:88px;height:30px;border:3px solid #c8161d;box-shadow:0 0 4px rgba(0,0,0,.45), inset 0 0 4px rgba(0,0,0,.35)"></div>
 <div class="abs" style="left:378px;top:135px;width:52px;height:48px;border:3px solid #c8161d;box-shadow:0 0 4px rgba(0,0,0,.45), inset 0 0 4px rgba(0,0,0,.35)"></div>
 <div class="abs" style="left:817px;top:457px;width:168px;height:48px;border:3px solid #cf1a1f;background:#454545;box-shadow:0 0 4px rgba(0,0,0,.45)">
  <div class="t" style="left:7.5px;top:14.7px;font-size:13px;color:#ececec;letter-spacing:-0.1px">Organize Pages</div>
  <svg class="ic" style="left:131px;top:11px" width="25" height="24" viewBox="0 0 25 24">
   <rect x="13.1" y="1" width="8.1" height="18.1" fill="none" stroke="#9ad65e" stroke-width="2"/>
   <path d="M2 0.2L9 1 2.8 7z" fill="#8fd14f"/>
   <path d="M5.5 3.8L10.8 .6" stroke="#9ad65e" stroke-width="2"/>
   <path d="M11 10H2.2V19.9H11" fill="none" stroke="#9ad65e" stroke-width="2" stroke-dasharray="2 2"/>
  </svg>
 </div>
 <div class="circ" style="left:340px;top:144.5px">2</div>
 <div class="circ" style="left:494px;top:323px">3</div>
 <div class="circ" style="left:778px;top:463px">1</div>
</div>
<div id="frame"></div>
<div class="abs" style="left:805px;top:0;width:145px;height:1px;background:#b06a72"></div>
</body></html>
